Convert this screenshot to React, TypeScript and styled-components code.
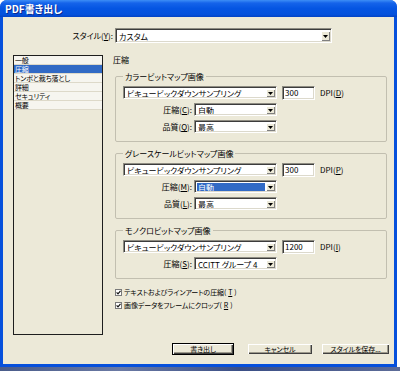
import React from "react";
import styled, { createGlobalStyle } from "styled-components";

const Global = createGlobalStyle`
  html, body { margin: 0; padding: 0; background: #fff; }
  body { font-family: "Noto Sans CJK JP", "Noto Sans", sans-serif; font-size: 8px; color: #000; }
  * { box-sizing: border-box; }
`;

const FONT = `"Noto Sans CJK JP", "Noto Sans", sans-serif`;

const Page = styled.div`
  width: 400px;
  height: 371px;
  display: flex;
  flex-direction: column;
  overflow: hidden;
  background: #fff;
`;

const Window = styled.div`
  width: 397px;
  height: 367px;
  flex: none;
  display: flex;
  flex-direction: column;
  border-radius: 7px 7px 0 0;
  overflow: hidden;
  background: #0a4fdc;
`;

const TitleBar = styled.div`
  height: 17px;
  flex: none;
  display: flex;
  align-items: center;
  padding-left: 5px;
  background: linear-gradient(to bottom, #3d8ef6 0%, #1563ea 18%, #0555e2 50%, #0451dc 85%, #0343c4 100%);
  color: #fff;
  font: bold 10px ${FONT};
  font-feature-settings: "palt";
  text-shadow: 1px 1px #0b2a8e;
`;

const Frame = styled.div`
  flex: 1;
  display: flex;
  padding: 0 3px 3px 3px;
  background: #0650dc;
`;

const Content = styled.div`
  flex: 1;
  display: flex;
  flex-direction: column;
  padding: 11px 4px 0 10px;
  background: #ece9d8;
  font: 8px/9px ${FONT};
  font-feature-settings: "palt";
`;

const StyleRow = styled.div`
  display: flex;
  align-items: center;
  height: 15px;
`;

const FieldLabel = styled.div<{ $w: number }>`
  width: ${(p) => p.$w}px;
  flex: none;
  text-align: right;
  padding-right: 2px;
  white-space: nowrap;
`;

const Combo = styled.div<{ $w: number; $h?: number }>`
  width: ${(p) => p.$w}px;
  height: ${(p) => p.$h ?? 13}px;
  flex: none;
  display: flex;
  padding: 2px 1px 1px 2px;
  background: #fff;
  border-top: 1px solid #8e8c82;
  border-left: 1px solid #8e8c82;
  border-right: 1px solid #fff;
  border-bottom: 1px solid #fff;
  box-shadow: inset 1px 1px #3c3c3c, inset -1px -1px #dcd9cc;
`;

const ComboText = styled.div<{ $hl?: boolean }>`
  flex: 1;
  margin-right: 1px;
  padding-left: 1px;
  white-space: nowrap;
  overflow: hidden;
  display: flex;
  align-items: center;
  background: ${(p) => (p.$hl ? "#316ac5" : "transparent")};
  color: ${(p) => (p.$hl ? "#fff" : "#000")};
`;

const ArrowBtn = styled.div`
  width: 9px;
  flex: none;
  display: flex;
  align-items: center;
  justify-content: center;
  background: #ece9d8;
  box-shadow: inset 1px 1px #fff, inset -1px -1px #808080;
`;

const MainRow = styled.div`
  display: flex;
  gap: 10px;
  margin-top: 12px;
`;

const ListBox = styled.div`
  width: 90px;
  height: 280px;
  flex: none;
  border: 1px solid #1e1e1e;
  background: #ece9d8;
  display: flex;
  flex-direction: column;
`;

const ListItem = styled.div<{ $sel?: boolean }>`
  height: 9px;
  padding-left: 1px;
  font-size: 7px;
  line-height: 8px;
  letter-spacing: -0.2px;
  white-space: nowrap;
  background: ${(p) => (p.$sel ? "#316ac5" : "#f6f5ef")};
  color: ${(p) => (p.$sel ? "#fff" : "#000")};
  border-bottom: 1px solid #ddd9c9;
`;

const RightPanel = styled.div`
  width: 275px;
  flex: none;
  display: flex;
  flex-direction: column;
`;

const SectionTitle = styled.div`
  height: 9px;
  line-height: 9px;
  margin-bottom: 1px;
`;

const Group = styled.fieldset`
  width: 272px;
  margin: 7px 0 0 2px;
  padding: 5px 0 8px 7px;
  border: 1px solid #c2bfb0;
  border-radius: 2px;
  min-width: 0;
`;

const Legend = styled.legend`
  padding: 0 2px;
  line-height: 9px;
  font-size: 8px;
`;

const Rows = styled.div`
  display: flex;
  flex-direction: column;
  gap: 4px;
`;

const Row = styled.div`
  display: flex;
  align-items: center;
  height: 13px;
`;

const DpiInput = styled.input`
  width: 33px;
  height: 14px;
  margin-left: 5px;
  padding: 1px 2px;
  font: 8px/9px ${FONT};
  background: #fff;
  border-top: 1px solid #8e8c82;
  border-left: 1px solid #8e8c82;
  border-right: 1px solid #fff;
  border-bottom: 1px solid #fff;
  box-shadow: inset 1px 1px #3c3c3c, inset -1px -1px #dcd9cc;
  outline: none;
`;

const DpiLabel = styled.span`
  margin-left: 5px;
  white-space: nowrap;
`;

const Checks = styled.div`
  display: flex;
  flex-direction: column;
  gap: 2px;
  margin: 8px 0 0 2px;
`;

const CheckRow = styled.label`
  display: flex;
  align-items: center;
  gap: 2px;
  height: 11px;
  font-size: 7px;
  letter-spacing: -0.1px;
  white-space: nowrap;
`;

const ButtonRow = styled.div`
  display: flex;
  justify-content: flex-end;
  margin-top: 8px;
`;

const Button = styled.button<{ $w: number; $ml: number; $def?: boolean }>`
  width: ${(p) => p.$w}px;
  height: 12px;
  margin-left: ${(p) => p.$ml}px;
  padding: 0;
  font: 7px/9px ${FONT};
  font-feature-settings: "palt";
  letter-spacing: -0.1px;
  color: #000;
  background: #ece9d8;
  border: 1px solid ${(p) => (p.$def ? "#000" : "transparent")};
  box-shadow: inset 1px 1px #fff, inset -1px -1px #404040, inset -2px -2px #9d9a8c;
  white-space: nowrap;
`;

const BottomStrip = styled.div`
  flex: 1;
  background: linear-gradient(to right, #4a5c8a, #6b7aa4 30%, #3b4f86 60%, #5d6c98);
`;

const DownArrow = () => (
  <svg width="5" height="3" viewBox="0 0 5 3">
    <path d="M0 0h5L2.5 3z" fill="#000" />
  </svg>
);

const Select = ({ w, text, hl, h }: { w: number; text: string; hl?: boolean; h?: number }) => (
  <Combo $w={w} $h={h}>
    <ComboText $hl={hl}>{text}</ComboText>
    <ArrowBtn>
      <DownArrow />
    </ArrowBtn>
  </Combo>
);

const CheckMark = () => (
  <svg width="7" height="7" viewBox="0 0 7 7">
    <rect x="0.5" y="0.5" width="6" height="6" fill="#fff" stroke="#7a7a7a" />
    <path d="M1.6 3.4 L3 4.9 L5.5 1.9" fill="none" stroke="#111" strokeWidth="1.2" />
  </svg>
);

const LabeledSelect = ({ label, mn, text, hl }: { label: string; mn: string; text: string; hl?: boolean }) => (
  <Row>
    <FieldLabel $w={71}>
      {label}(<u>{mn}</u>):
    </FieldLabel>
    <Select w={83} text={text} hl={hl} />
  </Row>
);

const DownsampleRow = ({ dpi, mn }: { dpi: string; mn: string }) => (
  <Row>
    <Select w={154} text="ビキュービックダウンサンプリング" />
    <DpiInput defaultValue={dpi} readOnly />
    <DpiLabel>
      DPI(<u>{mn}</u>)
    </DpiLabel>
  </Row>
);

export default function App() {
  const items = ["一般", "圧縮", "トンボと裁ち落とし", "詳細", "セキュリティ", "概要"];
  return (
    <Page>
      <Global />
      <Window>
        <TitleBar>PDF書き出し</TitleBar>
        <Frame>
          <Content>
            <StyleRow>
              <FieldLabel $w={102}>
                スタイル(<u>Y</u>):
              </FieldLabel>
              <Select w={217} h={15} text="カスタム" />
            </StyleRow>
            <MainRow>
              <ListBox>
                {items.map((it) => (
                  <ListItem key={it} $sel={it === "圧縮"}>
                    {it}
                  </ListItem>
                ))}
              </ListBox>
              <RightPanel>
                <SectionTitle>圧縮</SectionTitle>
                <Group>
                  <Legend>カラービットマップ画像</Legend>
                  <Rows>
                    <DownsampleRow dpi="300" mn="D" />
                    <LabeledSelect label="圧縮" mn="C" text="自動" />
                    <LabeledSelect label="品質" mn="Q" text="最高" />
                  </Rows>
                </Group>
                <Group>
                  <Legend>グレースケールビットマップ画像</Legend>
                  <Rows>
                    <DownsampleRow dpi="300" mn="P" />
                    <LabeledSelect label="圧縮" mn="M" text="自動" hl />
                    <LabeledSelect label="品質" mn="L" text="最高" />
                  </Rows>
                </Group>
                <Group>
                  <Legend>モノクロビットマップ画像</Legend>
                  <Rows>
                    <DownsampleRow dpi="1200" mn="I" />
                    <LabeledSelect label="圧縮" mn="S" text="CCITT グループ 4" />
                  </Rows>
                </Group>
                <Checks>
                  <CheckRow>
                    <CheckMark />
                    テキストおよびラインアートの圧縮(<u>T</u>)
                  </CheckRow>
                  <CheckRow>
                    <CheckMark />
                    画像データをフレームにクロップ(<u>R</u>)
                  </CheckRow>
                </Checks>
              </RightPanel>
            </MainRow>
            <ButtonRow>
              <Button $w={62} $ml={0} $def>
                書き出し
              </Button>
              <Button $w={66} $ml={13}>
                キャンセル
              </Button>
              <Button $w={69} $ml={8}>
                スタイルを保存...
              </Button>
            </ButtonRow>
          </Content>
        </Frame>
      </Window>
      <BottomStrip />
    </Page>
  );
}
